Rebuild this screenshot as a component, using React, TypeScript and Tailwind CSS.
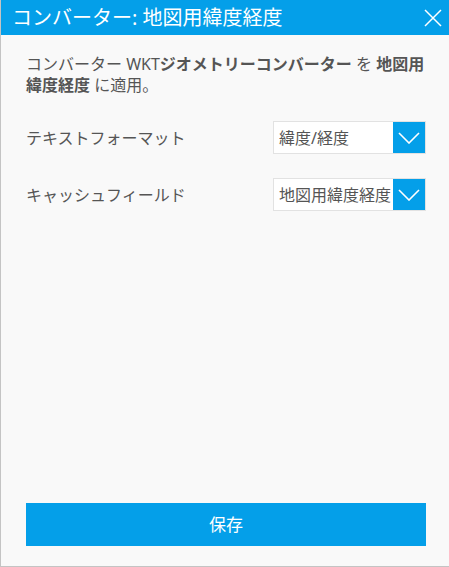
const font = { fontFamily: '"Noto Sans", "Noto Sans CJK JP", sans-serif' };

function Chevron() {
  return (
    <svg width="22" height="12" viewBox="0 0 22 12" fill="none">
      <path d="M1 1 L11 11 L21 1" stroke="white" strokeWidth="1.6" />
    </svg>
  );
}

function CloseIcon() {
  return (
    <svg width="18" height="18" viewBox="0 0 18 18" fill="none">
      <path d="M1 1 L17 17 M17 1 L1 17" stroke="white" strokeWidth="1.5" />
    </svg>
  );
}

function Select({ value }: { value: string }) {
  return (
    <div className="flex h-[33px] w-[153px] border border-[#e2e2e2] bg-white">
      <div className="flex flex-1 items-center overflow-hidden whitespace-nowrap pl-[5px] text-[16px] text-[#555]">
        {value}
      </div>
      <div className="flex w-[32px] shrink-0 items-center justify-center bg-[#049fe9]">
        <Chevron />
      </div>
    </div>
  );
}

function Row({ label, value }: { label: string; value: string }) {
  return (
    <div className="flex items-center justify-between">
      <span className="text-[16px] text-[#555]">{label}</span>
      <Select value={value} />
    </div>
  );
}

export default function App() {
  return (
    <div
      style={font}
      className="flex h-[567px] w-[449px] flex-col border-b border-l border-[#c4c4c4] bg-[#f9f9f9]"
    >
      <div className="flex h-[35px] shrink-0 items-center justify-between bg-[#049fe9] pl-[11px] pr-[7px]">
        <span className="text-[20px] leading-none text-white">コンバーター: 地図用緯度経度</span>
        <CloseIcon />
      </div>

      <div className="flex flex-1 flex-col pb-[20px] pl-[25px] pr-[23px] pt-[19px]">
        <p className="text-[16px] leading-[21px] text-[#555]">
          <span className="whitespace-nowrap">
            コンバーター WKT<b className="font-bold">ジオメトリーコンバーター</b> を <b className="font-bold">地図用</b>
          </span>
          <br />
          <b className="font-bold">緯度経度</b> に適用。
        </p>

        <div className="mt-[25px] flex flex-col gap-[24px]">
          <Row label="テキストフォーマット" value="緯度/経度" />
          <Row label="キャッシュフィールド" value="地図用緯度経度" />
        </div>

        <button className="mt-auto h-[43px] w-full bg-[#049fe9] text-[17px] text-white">
          保存
        </button>
      </div>
    </div>
  );
}
